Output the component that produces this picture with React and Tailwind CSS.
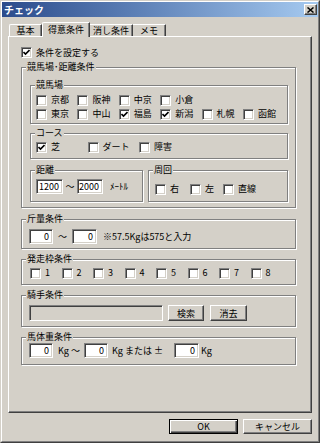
import React from "react";

function Check() {
  return (
    <svg width="7" height="7" viewBox="0 0 7 7">
      <path d="M0.5 3 L2.5 5 L6.5 1" fill="none" stroke="#000" strokeWidth="1.6" />
    </svg>
  );
}

function CB({ checked, label }) {
  return (
    <div className="flex items-center h-[14px]">
      <span className="w-[11px] h-[11px] shrink-0 bg-white border border-t-[#808080] border-l-[#808080] border-b-white border-r-white shadow-[inset_1px_1px_0_#404040,inset_-1px_-1px_0_#d4d0c8] flex items-center justify-center">
        {checked ? <Check /> : null}
      </span>
      <span className="ml-[4px] leading-[14px] whitespace-nowrap">{label}</span>
    </div>
  );
}

function Group({ label, className, children }) {
  return (
    <div className={"relative border border-[#808080] shadow-[inset_1px_1px_0_#fff,1px_1px_0_#fff] " + className}>
      <span className="absolute left-[4px] top-[-7px] bg-[#d4d0c8] px-[1px] leading-[12px] whitespace-nowrap">{label}</span>
      {children}
    </div>
  );
}

function Input({ value, className }) {
  return (
    <div className={"h-[15px] bg-white border border-t-[#808080] border-l-[#808080] border-b-white border-r-white shadow-[inset_1px_1px_0_#404040,inset_-1px_-1px_0_#d4d0c8] text-right pr-[3px] leading-[13px] " + className}>
      {value}
    </div>
  );
}

function Btn({ children, className }) {
  return (
    <div className={"flex items-center justify-center border border-t-white border-l-white border-b-[#404040] border-r-[#404040] shadow-[inset_-1px_-1px_0_#808080] leading-none " + className}>
      {children}
    </div>
  );
}

export default function App() {
  return (
    <div className="w-[320px] h-[443px] bg-[#d4d0c8] border border-t-[#d4d0c8] border-l-[#d4d0c8] border-b-[#404040] border-r-[#404040] font-['Noto_Sans_CJK_JP',sans-serif] text-[9px] text-black overflow-hidden">
      <div className="h-full border border-t-white border-l-white border-b-[#808080] border-r-[#808080]">
        {/* title bar */}
        <div className="h-[15px] flex items-center justify-between bg-linear-to-r from-[#2c4c8c] to-[#a6caf0] pl-[2px] pr-[1px]">
          <span className="text-white font-bold text-[10px] leading-none">チェック</span>
          <div className="w-[13px] h-[11px] flex items-center justify-center bg-[#d4d0c8] border border-t-white border-l-white border-b-[#404040] border-r-[#404040] shadow-[inset_-1px_-1px_0_#808080]">
            <svg width="7" height="6" viewBox="0 0 7 6">
              <path d="M0.5 0.5 L6.5 5.5 M6.5 0.5 L0.5 5.5" stroke="#000" strokeWidth="1.5" />
            </svg>
          </div>
        </div>

        {/* tabs */}
        <div className="mt-[5px] pl-[7px] h-[14px] flex items-end">
          <div className="w-[33px] h-[12px] border-l border-t border-r border-l-white border-t-white border-r-[#404040] shadow-[inset_-1px_0_0_#808080] rounded-tl-[2px] flex items-center justify-center leading-none">基本</div>
          <div className="relative z-10 w-[48px] h-[15px] -mb-[1px] bg-[#d4d0c8] border-l border-t border-r border-l-white border-t-white border-r-[#404040] shadow-[inset_-1px_0_0_#808080] rounded-tl-[2px] flex items-start pt-[2px] justify-center leading-none">得意条件</div>
          <div className="w-[43px] h-[12px] border-t border-r border-t-white border-r-[#404040] shadow-[inset_-1px_0_0_#808080] flex items-center justify-center leading-none">消し条件</div>
          <div className="w-[33px] h-[12px] border-t border-r border-t-white border-r-[#404040] shadow-[inset_-1px_0_0_#808080] flex items-center justify-center leading-none">メモ</div>
        </div>

        {/* panel */}
        <div className="ml-[6px] w-[304px] h-[377px] border border-t-white border-l-white border-b-[#404040] border-r-[#404040] shadow-[inset_-1px_-1px_0_#808080] flex flex-col">
          <div className="ml-[12px] mt-[9px] h-[13px] flex items-center">
            <CB checked label="条件を設定する" />
          </div>

          <Group label="競馬場･距離条件" className="ml-[12px] mt-[8px] w-[275px] h-[141px] flex flex-col">
            <Group label="競馬場" className="ml-[8px] mt-[17px] w-[258px] h-[39px] pt-[7px] pl-[5px]">
              <div className="grid grid-cols-[repeat(6,41.4px)]">
                <CB label="京都" />
                <CB label="阪神" />
                <CB label="中京" />
                <CB label="小倉" />
                <div />
                <div />
                <CB label="東京" />
                <CB label="中山" />
                <CB checked label="福島" />
                <CB checked label="新潟" />
                <CB label="札幌" />
                <CB label="函館" />
              </div>
            </Group>
            <Group label="コース" className="ml-[8px] mt-[9px] w-[258px] h-[26px] pt-[6px] pl-[5px]">
              <div className="grid grid-cols-[repeat(3,51.5px)]">
                <CB checked label="芝" />
                <CB label="ダート" />
                <CB label="障害" />
              </div>
            </Group>
            <div className="ml-[8px] mt-[11px] flex gap-[5px]">
              <Group label="距離" className="w-[113px] h-[32px] pt-[8px] pl-[5px]">
                <div className="flex items-center">
                  <Input value="1200" className="w-[27px]" />
                  <span className="w-[14px] text-center leading-none">～</span>
                  <Input value="2000" className="w-[26px]" />
                  <span className="ml-[7px] leading-none whitespace-nowrap">ﾒｰﾄﾙ</span>
                </div>
              </Group>
              <Group label="周回" className="w-[140px] h-[32px] pt-[11px] pl-[6px]">
                <div className="flex">
                  <div className="w-[35px]"><CB label="右" /></div>
                  <div className="w-[33px]"><CB label="左" /></div>
                  <CB label="直線" />
                </div>
              </Group>
            </div>
          </Group>

          <Group label="斤量条件" className="ml-[12px] mt-[11px] w-[275px] h-[30px] pt-[9px] pl-[7px]">
            <div className="flex items-center">
              <Input value="0" className="w-[24px]" />
              <span className="w-[19px] text-center leading-none">～</span>
              <Input value="0" className="w-[25px]" />
              <span className="ml-[6px] leading-none whitespace-nowrap">※57.5Kgは575と入力</span>
            </div>
          </Group>

          <Group label="発走枠条件" className="ml-[12px] mt-[10px] w-[275px] h-[26px] pt-[6px] pl-[8px]">
            <div className="grid grid-cols-[repeat(8,31.5px)]">
              <CB label="1" />
              <CB label="2" />
              <CB label="3" />
              <CB label="4" />
              <CB label="5" />
              <CB label="6" />
              <CB label="7" />
              <CB label="8" />
            </div>
          </Group>

          <Group label="騎手条件" className="ml-[12px] mt-[10px] w-[275px] h-[32px] pt-[9px] pl-[7px]">
            <div className="flex items-center">
              <div className="w-[134px] h-[16px] bg-[#d4d0c8] border border-t-[#808080] border-l-[#808080] border-b-white border-r-white shadow-[inset_1px_1px_0_#404040,inset_-1px_-1px_0_#d4d0c8]" />
              <Btn className="ml-[5px] w-[36px] h-[16px]">検索</Btn>
              <Btn className="ml-[6px] w-[37px] h-[16px]">消去</Btn>
            </div>
          </Group>

          <Group label="馬体重条件" className="ml-[12px] mt-[10px] w-[275px] h-[28px] pt-[5px] pl-[7px]">
            <div className="flex items-center">
              <Input value="0" className="w-[24px]" />
              <span className="w-[31px] pl-[5px] leading-none whitespace-nowrap">Kg ～</span>
              <Input value="0" className="w-[24px]" />
              <span className="w-[66px] pl-[4px] leading-none whitespace-nowrap">Kg または ±</span>
              <Input value="0" className="w-[25px]" />
              <span className="ml-[2px] leading-none">Kg</span>
            </div>
          </Group>
        </div>

        {/* bottom buttons */}
        <div className="mt-[6px] pr-[6px] flex justify-end gap-[5px]">
          <div className="w-[69px] h-[15px] border border-black shadow-[inset_1px_1px_0_#fff,inset_-1px_-1px_0_#404040,inset_-2px_-2px_0_#808080] flex items-center justify-center leading-none">OK</div>
          <Btn className="w-[69px] h-[15px]">キャンセル</Btn>
        </div>
      </div>
    </div>
  );
}
